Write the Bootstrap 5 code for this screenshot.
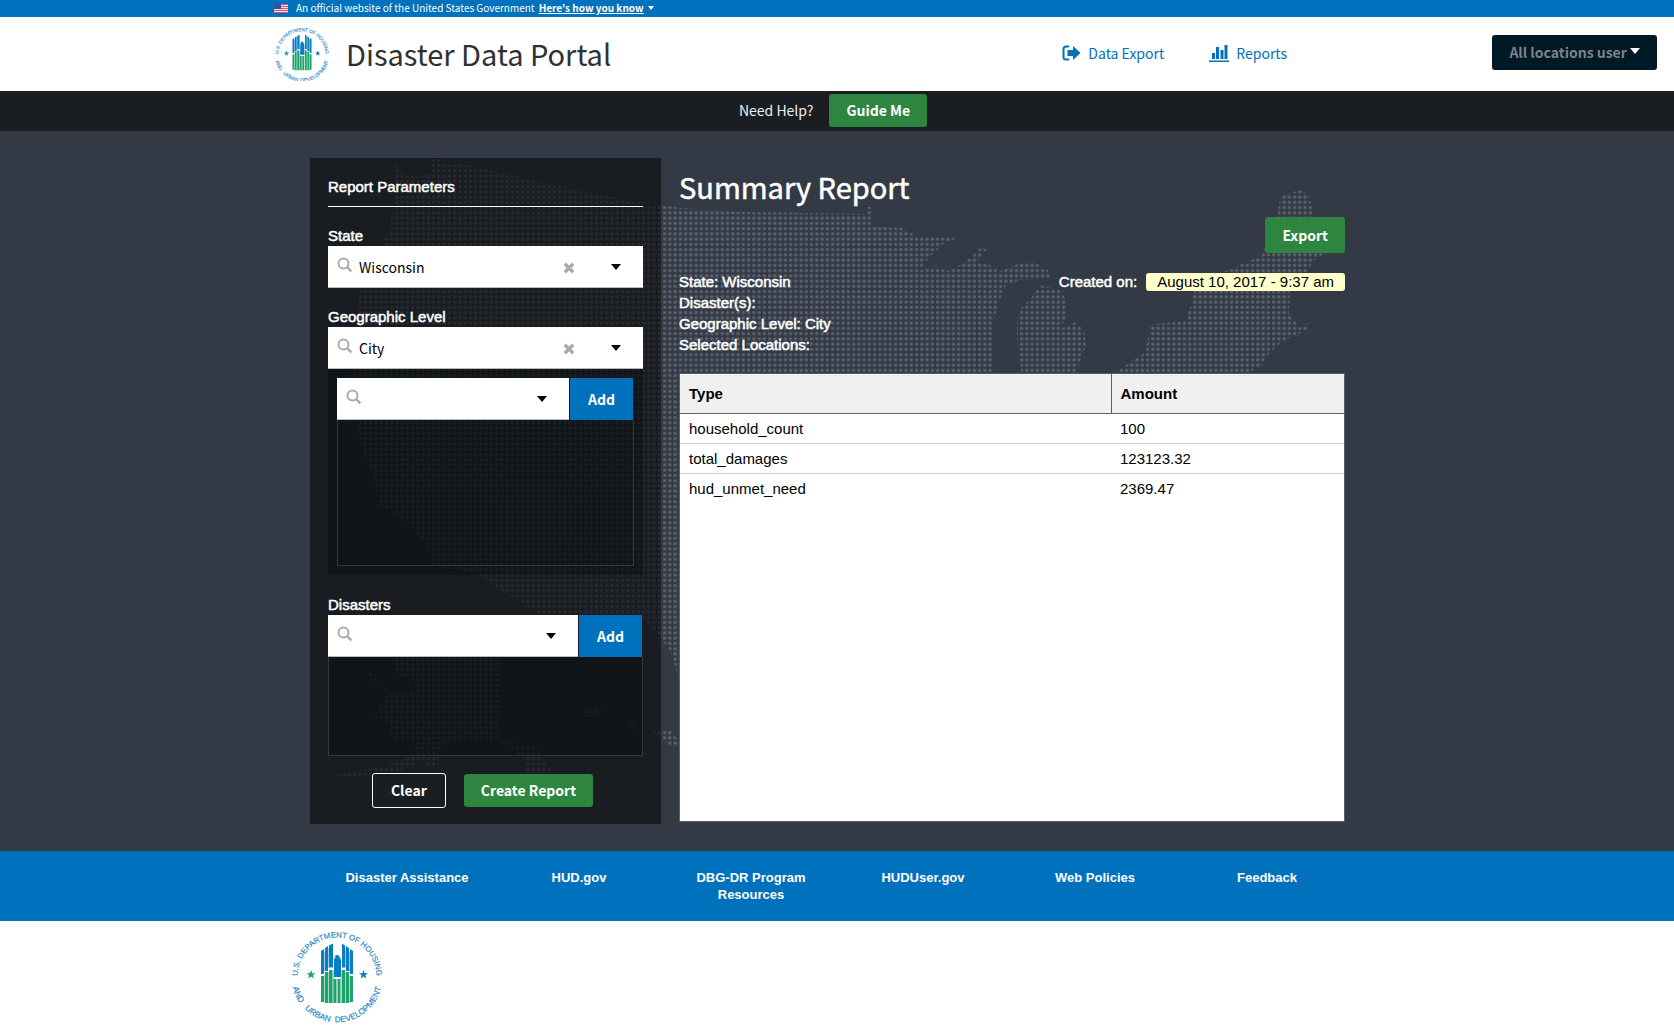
<!DOCTYPE html>
<html lang="en">
<head>
<meta charset="utf-8">
<meta name="viewport" content="width=device-width, initial-scale=1">
<title>Disaster Data Portal</title>
<link href="https://cdn.jsdelivr.net/npm/bootstrap@5.3.0/dist/css/bootstrap.min.css" rel="stylesheet">
<style>
:root{--blue:#0071bc;--green:#2e8540;--ui:"Noto Sans CJK SC","Open Sans",sans-serif;--plain:"Liberation Sans",Arial,sans-serif}
body{font-family:var(--plain);font-size:15px;line-height:21px;color:#000;background:#fff}
.bg-blue{background:var(--blue)}
.frame{display:grid;grid-template-columns:1fr minmax(0,1126px) 1fr}
.frame>.mid{grid-column:2}
.gov{font:10px/16px var(--ui);color:#fff;height:17px;padding-bottom:1px}
.gov a{color:#fff;font-weight:700}
.caret{display:inline-block;width:0;height:0;border:5px solid transparent;border-top:6px solid currentColor;border-bottom:0}
.caret.tiny{border-width:4px 3px 0}
.masthead{height:74px;padding-bottom:3px}
.brand-name{font:400 29px/40px var(--ui);color:#2f3033;margin:0 0 0 16px}
.site-nav{gap:45px;margin-right:113px;padding-top:1px}
.site-nav a{font:14px/20px var(--ui);color:var(--blue);text-decoration:none;gap:7px}
.pill{font:700 14px/20px var(--ui);border:0;border-radius:3px;color:#fff;padding:6px 17px 7px}
.pill.go{background:var(--green)}
.pill.line{background:#1a1d21;border:1px solid #fff;padding:6px 18px 7px}
.pill.user{background:#001927;color:#7d8386;height:35px;margin-right:17px;white-space:nowrap}
.pill.user .caret{color:#fff;vertical-align:4px}
.helpbar{background:#1a1e22;height:40px;padding-bottom:2px;color:#eee;font:14px/20px var(--ui)}
.stage{background:#333a46;padding:27px 0}
.work{max-width:1054px;padding-right:19px;position:relative}
.map{position:absolute;left:0;top:0;pointer-events:none}
.params{width:351px;padding:18px 18px 16px;background:rgba(13,13,14,.65);color:#fff;position:relative;flex:none}
.params h2{font-size:15px;line-height:21px;margin:0;padding-bottom:9px;border-bottom:1px solid #fff}
.soft{font-weight:400;-webkit-text-stroke:.5px currentColor}
.fld{display:block;line-height:18px;margin-bottom:1px}
.combo{background:#fff;height:42px;border-bottom:1px solid #bbb;padding-left:9px;min-width:0}
.combo svg.glass{width:16px;height:16px;margin-bottom:3px;flex:none}
.combo input{border:0;background:none;outline:0;flex:1;min-width:0;font:14px/22px var(--ui);color:#000;padding:0 0 0 6px}
.combo button{border:0;background:none;padding:0;width:22px;line-height:1;color:#000}
.combo .drop{margin:0 16px 4px 25px}
.add{font:700 14px/20px var(--ui);background:var(--blue);color:#fff;border:0;width:63px;height:42px;flex:none;margin:0 1px}
.nest{background:rgba(6,9,10,.35);padding:9px;margin-bottom:21px}
.picked{border:1px solid #35383a;border-top:0}
.picked.tall{height:146px}
.picked.short{height:99px;background:rgba(6,9,10,.35)}
.actions{gap:18px;margin-top:17px;padding-right:6px}
.report{position:relative;color:#fff;margin-left:18px;flex:1;min-width:0}
.report h1{font:400 29px/40px var(--ui);margin:8px 0 11px}
.facts{margin-top:18px}
.stamp{background:#ffc;color:#000;border-radius:3px;line-height:18px;padding:0 11px;margin-left:9px;-webkit-text-stroke:0}
.sheet{background:#fff;border:1px solid #5b616b;margin-top:18px;height:449px}
.sheet table{width:100%;color:#000;table-layout:fixed}
.sheet th{background:#f0f0f0;height:39px;padding:0 9px;border-bottom:1px solid #5b616b;font-size:15px}
.sheet th+th{border-left:1px solid #5b616b;width:233px}
.sheet td{height:30px;padding:0 9px;border-bottom:1px solid #ccc}
.sheet tr:last-child td{border-bottom:0}
.flinks{max-width:1032px;min-height:70px;padding-top:18px}
.flinks a{display:block;color:#fff;font-size:13px;line-height:17px;font-weight:700;text-align:center;text-decoration:none}
.flogo{max-width:1106px;padding-top:1px}
</style>
</head>
<body>
<svg width="0" height="0" class="position-absolute" aria-hidden="true">
  <defs>
    <symbol id="seal" viewBox="0 0 104 104">
      <path id="arcTop" d="M13.500 55A39.500 39.500 0 1 1 92.500 55" fill="none"/>
      <path id="arcBot" d="M8 48A45.500 45.500 0 1 0 98 48" fill="none"/>
      <g fill="#1c84c6" stroke="#1c84c6" stroke-width=".15" font-family="Liberation Sans,Arial,sans-serif" text-anchor="middle">
        <text font-size="7.800"><textPath href="#arcTop" startOffset="50%">U.S. DEPARTMENT OF HOUSING</textPath></text>
        <text font-size="8.300"><textPath href="#arcBot" startOffset="50%">AND&#160;&#160; URBAN&#160; DEVELOPMENT</textPath></text>
      </g>
      <path fill="#9ccfe9" d="M40 30h2v19h-2zM44 26h1v20h-1zM61 26h1v20h-1zM65 30h2v19h-2z"/>
      <path fill="#a5dcc3" d="M40 53h1v27h-1zM44 50h1v31h-1zM48.500 49h1.500v32h-1.500zM57 49h1v32h-1zM61 50h1v31h-1zM65 53h1v27h-1z"/>
      <path fill="#0a7dc5" d="M37 29l3-2v25h-3zM41 26l3-2v25h-3zM45 23.500l4-2v24h-4zM69 29l-3-2v25h3zM65 26l-3-2v25h3zM61 23.500l-3-2v24h3zM50 55V38q0-2 2-3l-1.500-.5q1-2 3-1.500 2.500.5 2.500 3l1 2v17z"/>
      <path fill="#1fa36e" d="M37 54h3v26h-3zM41 50h3v31h-3zM45 48h3.500v33H45zM49.500 57h3v24h-3zM53.500 57h3v24h-3zM58 48h3v33h-3zM62 50h3v31h-3zM66 54h3v26h-3z"/>
      <path fill="#1fa36e" d="M27 48l1.200 3.200h3.300l-2.600 2 1 3.300-2.900-2-2.900 2 1-3.300-2.600-2h3.300z"/>
      <path fill="#0a7dc5" d="M79.500 48l1.200 3.200h3.300l-2.600 2 1 3.300-2.900-2-2.900 2 1-3.300-2.600-2h3.300z"/>
    </symbol>
    <symbol id="lens" viewBox="0 0 16 16"><circle cx="6.500" cy="6.500" r="5" fill="none" stroke="#aaa" stroke-width="2"/><path d="M10 10l4.300 4.300" stroke="#aaa" stroke-width="2.400"/></symbol>
    <symbol id="cross" viewBox="0 0 10 10"><path d="M1.500 1.500l7 7M8.500 1.500l-7 7" stroke="#aaa" stroke-width="2.800"/></symbol>
  </defs>
</svg>

<div class="frame bg-blue gov">
  <div class="mid d-flex align-items-center">
    <svg width="14" height="9" viewBox="0 0 14 9" class="me-2" aria-hidden="true"><path fill="#f3d9de" d="M0 0h14v9H0z"/><path stroke="#e0566a" d="M0 .5h14M0 2.500h14M0 4.500h14M0 6.500h14M0 8.500h14"/><path fill="#3b4fa0" d="M0 0h7v5H0z"/></svg>
    <span>An official website of the United States Government</span>
    <a href="#" class="ms-1">Here's how you know</a><span class="caret tiny ms-1"></span>
  </div>
</div>

<header class="frame masthead align-items-center">
  <div class="mid d-flex align-items-center">
    <svg width="56" height="56" viewBox="6 5 94 94" role="img" aria-label="HUD seal"><use href="#seal" width="104" height="104"/></svg>
    <p class="brand-name">Disaster Data Portal</p>
    <nav class="site-nav d-flex ms-auto">
      <a href="#" class="d-flex align-items-center"><svg width="19" height="16" viewBox="0 0 19 16" aria-hidden="true"><path fill="none" stroke="#0071bc" stroke-width="2" d="M7 1.500H4Q1.500 1.500 1.500 4v8q0 2.500 2.500 2.500h3"/><path fill="#0071bc" d="M5.500 5H11V1l7.500 7-7.500 7v-4H5.500z"/></svg>Data Export</a>
      <a href="#" class="d-flex align-items-center"><svg width="20" height="17" viewBox="0 0 20 17" aria-hidden="true"><path fill="#0071bc" d="M0 15.500h20V17H0zM3 8h3v6H3zM7 2h3v12H7zM11.500 5h3v9h-3zM15.500 0h3v14h-3z"/></svg>Reports</a>
    </nav>
  </div>
  <div class="text-end"><button type="button" class="pill user">All locations user <span class="caret"></span></button></div>
</header>

<div class="helpbar d-flex justify-content-center align-items-center">
  <span>Need Help?</span><button type="button" class="pill go ms-3 me-2">Guide Me</button>
</div>

<main class="stage">
  <div class="work mx-auto d-flex">
    <svg class="map" width="1054" height="666" viewBox="310 158 1054 666" aria-hidden="true">
      <defs><pattern id="dots" x="662" y="205" width="5.250" height="5.250" patternUnits="userSpaceOnUse"><rect x="1" y="1" width="3.200" height="3.200" rx="1" fill="#5a616d"/></pattern></defs>
      <g fill="url(#dots)">
        <path d="M396 163L403 175 420 177 432 173 430 158 445 161 480 168 540 182 600 195 661 205 680 208 740 212 866 214 866 207 872 207 873 226 903 228 917 237 957 238 943 244 930 257 918 271 936 266 948 271 962 264 972 256 980 248 987 249 976 263 988 264 1000 271 1018 264 1032 261 1048 270 1051 279 1020 280 1006 285 1000 300 993 322 994 375H1022L1017 340 1017 320 1022 306 1030 300 1040 285 1062 290 1067 305 1066 318 1060 329 1075 322 1084 330 1086 345 1080 360 1076 375H1112L1145 352 1150 330 1147 325 1185 321 1193 300 1190 295 1215 275 1240 265 1262 255 1277 218 1280 200 1284 195 1300 190 1309 195 1313 212 1325 253 1312 262 1309 270 1290 290 1289 313 1300 328 1309 322 1309 330 1295 335 1280 343 1265 358 1262 365 1245 375 1112 400 1000 700H682L678 675 670 650 655 632 640 617 537 614 520 602 500 590 475 572 431 566 430 550 415 530 395 512 378 507 375 480 362 450 357 420 350 375 355 345 358 310 360 290 383 245 388 230 394 205z"/>
        <path d="M393 657H501V739L520 745 536 746 552 773H526L525 760 497 740 447 742 438 750 439 768 428 768 425 758 400 772 335 778 337 775 385 766 415 755 412 742 394 740 386 722 374 718 390 692 415 691 415 682 396 675zM366 673l8 2 5 7-5 1zM583 712l18-5v7l-18 3zM627 720h10v6l5 5-12-3zM652 731h20l10 16-12-1z"/>
      </g>
    </svg>

    <form class="params" onsubmit="return false">
      <h2 class="soft">Report Parameters</h2>
      <label class="fld soft mt-3 pt-1" for="state">State</label>
      <div class="combo d-flex align-items-center mb-3">
        <svg class="glass"><use href="#lens"/></svg>
        <input id="state" type="text" value="Wisconsin">
        <button type="button" aria-label="Clear state"><svg width="12" height="12"><use href="#cross"/></svg></button>
        <button type="button" class="drop" aria-label="Open state list"><span class="caret"></span></button>
      </div>
      <label class="fld soft pt-1" for="level">Geographic Level</label>
      <div class="combo d-flex align-items-center">
        <svg class="glass"><use href="#lens"/></svg>
        <input id="level" type="text" value="City">
        <button type="button" aria-label="Clear level"><svg width="12" height="12"><use href="#cross"/></svg></button>
        <button type="button" class="drop" aria-label="Open level list"><span class="caret"></span></button>
      </div>
      <div class="nest">
        <div class="d-flex">
          <div class="combo d-flex align-items-center flex-grow-1">
            <svg class="glass"><use href="#lens"/></svg>
            <input type="text" aria-label="Location">
            <button type="button" class="drop" aria-label="Open location list"><span class="caret"></span></button>
          </div>
          <button type="button" class="add">Add</button>
        </div>
        <div class="picked tall"></div>
      </div>
      <label class="fld soft" for="disaster">Disasters</label>
      <div class="d-flex">
        <div class="combo d-flex align-items-center flex-grow-1">
          <svg class="glass"><use href="#lens"/></svg>
          <input id="disaster" type="text">
          <button type="button" class="drop" aria-label="Open disaster list"><span class="caret"></span></button>
        </div>
        <button type="button" class="add">Add</button>
      </div>
      <div class="picked short"></div>
      <div class="actions d-flex justify-content-center align-items-center">
        <button type="reset" class="pill line">Clear</button>
        <button type="submit" class="pill go">Create Report</button>
      </div>
    </form>

    <section class="report">
      <h1 class="soft">Summary Report</h1>
      <div class="text-end"><button type="button" class="pill go py-2">Export</button></div>
      <div class="facts d-flex justify-content-between align-items-start soft">
        <div>State: Wisconsin<br>Disaster(s):<br>Geographic Level: City<br>Selected Locations:</div>
        <div class="d-flex align-items-center">Created on: <span class="stamp">August 10, 2017 - 9:37 am</span></div>
      </div>
      <div class="sheet">
        <table>
          <thead><tr><th scope="col">Type</th><th scope="col">Amount</th></tr></thead>
          <tbody>
            <tr><td>household_count</td><td>100</td></tr>
            <tr><td>total_damages</td><td>123123.32</td></tr>
            <tr><td>hud_unmet_need</td><td>2369.47</td></tr>
          </tbody>
        </table>
      </div>
    </section>
  </div>
</main>

<footer>
  <div class="bg-blue">
    <div class="flinks row g-0 mx-auto">
      <div class="col-2"><a href="#">Disaster Assistance</a></div>
      <div class="col-2"><a href="#">HUD.gov</a></div>
      <div class="col-2 px-4"><a href="#">DBG-DR Program Resources</a></div>
      <div class="col-2"><a href="#">HUDUser.gov</a></div>
      <div class="col-2"><a href="#">Web Policies</a></div>
      <div class="col-2"><a href="#">Feedback</a></div>
    </div>
  </div>
  <div class="flogo mx-auto"><svg width="104" height="104" viewBox="0 0 104 104" role="img" aria-label="HUD seal"><use href="#seal"/></svg></div>
</footer>
<script src="https://cdn.jsdelivr.net/npm/bootstrap@5.3.0/dist/js/bootstrap.bundle.min.js"></script>
</body>
</html>
